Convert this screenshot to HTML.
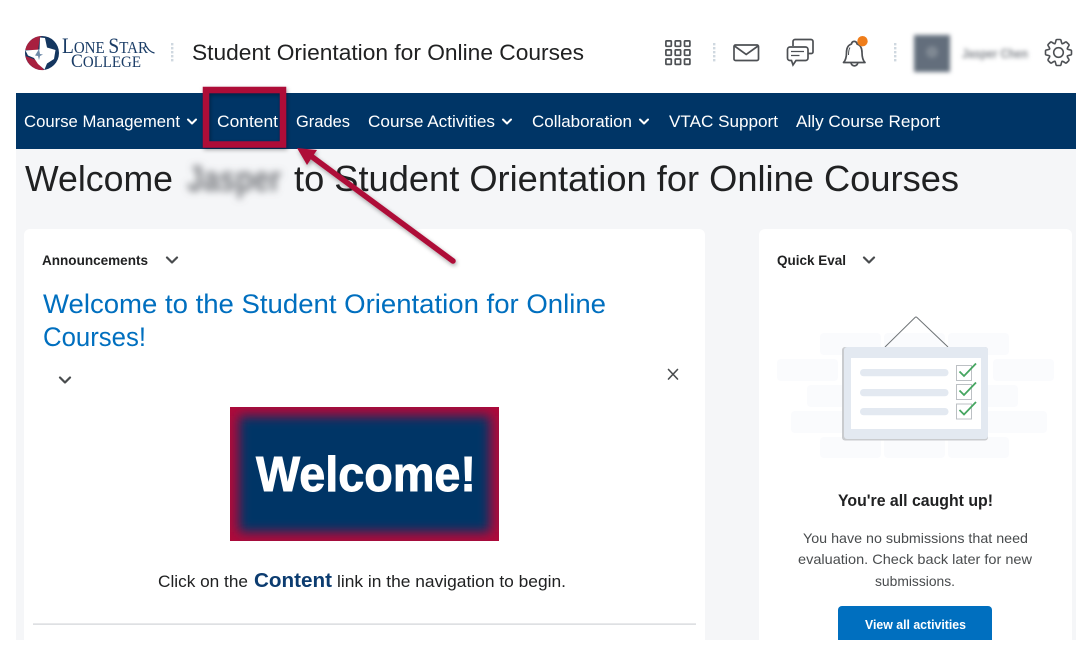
<!DOCTYPE html>
<html><head><meta charset="utf-8"><title>Student Orientation for Online Courses</title>
<style>html,body{margin:0;padding:0;background:#fff;width:1085px;height:653px;overflow:hidden}svg{display:block}text{font-family:"Liberation Sans",sans-serif;white-space:pre}</style></head>
<body>
<svg width="1085" height="653" viewBox="0 0 1085 653" xmlns="http://www.w3.org/2000/svg">
<defs>
<filter id="b2" x="-30%" y="-60%" width="160%" height="220%"><feGaussianBlur stdDeviation="3.600"/></filter>
<filter id="b1" x="-20%" y="-100%" width="140%" height="300%"><feGaussianBlur stdDeviation="2"/></filter>
<filter id="b5" x="-20%" y="-30%" width="140%" height="160%"><feGaussianBlur stdDeviation="5.500"/></filter>
<filter id="bl" x="-30%" y="-30%" width="160%" height="160%"><feGaussianBlur stdDeviation="2"/></filter>
<filter id="sh" x="-20%" y="-20%" width="140%" height="140%"><feDropShadow dx="1" dy="2" stdDeviation="2" flood-color="#000" flood-opacity=".35"/></filter>
<clipPath id="wc"><rect x="230" y="407" width="269" height="134"/></clipPath>
</defs>
<rect x="16" y="149" width="1060" height="491" fill="#f5f6f8"/>
<rect x="16" y="93" width="1060" height="56" fill="#003566"/>

<!-- logo -->
<circle cx="42" cy="53" r="17" fill="#14365f"/>
<path d="M42 36A17 17 0 0 0 25.300 50L38 50L40 37z" fill="#a8203f"/>
<path d="M25.500 56A17 17 0 0 0 44 70L36 60z" fill="#a8203f"/>
<path d="M40 37.500L39.500 49.500L25.500 50.500L28 55.500L34 58L38 64L44.500 69.500L47 63.500L54 59L55.500 50L47 47.500L45 38z" fill="#fff"/>
<path d="M36 54l3-5 1 5 3 .5-3 1.500-1 4-1-4-3-.5z" fill="#6f8aa8"/>
<text x="62" y="53" textLength="86" lengthAdjust="spacingAndGlyphs" font-size="17" fill="#1a3c66" style="font-family:'Liberation Serif',serif"><tspan font-size="22">L</tspan>ONE <tspan font-size="22">S</tspan>TAR</text>
<text x="71" y="67" textLength="70" lengthAdjust="spacingAndGlyphs" font-size="16" fill="#1a3c66" style="font-family:'Liberation Serif',serif"><tspan font-size="19">C</tspan>OLLEGE</text>
<path d="M146 46c2 3 4 6 8.500 7" fill="none" stroke="#1a3c66" stroke-width="1.200"/>

<!-- dividers -->
<g fill="#cfd8e0">
<rect x="171" y="43" width="2.400" height="2.400"/><rect x="171" y="47" width="2.400" height="2.400"/><rect x="171" y="51" width="2.400" height="2.400"/><rect x="171" y="55" width="2.400" height="2.400"/><rect x="171" y="59" width="2.400" height="2.400"/>
<rect x="713" y="43" width="2.400" height="2.400"/><rect x="713" y="47" width="2.400" height="2.400"/><rect x="713" y="51" width="2.400" height="2.400"/><rect x="713" y="55" width="2.400" height="2.400"/><rect x="713" y="59" width="2.400" height="2.400"/>
<rect x="894" y="43" width="2.400" height="2.400"/><rect x="894" y="47" width="2.400" height="2.400"/><rect x="894" y="51" width="2.400" height="2.400"/><rect x="894" y="55" width="2.400" height="2.400"/><rect x="894" y="59" width="2.400" height="2.400"/>
</g>

<text x="192" y="60" textLength="392" lengthAdjust="spacingAndGlyphs" font-size="22" fill="#202122">Student Orientation for Online Courses</text>

<!-- icons -->
<g fill="none" stroke="#4d5054" stroke-width="1.700">
<rect x="665.900" y="40.900" width="5.400" height="5.400" rx=".8"/><rect x="675.200" y="40.900" width="5.400" height="5.400" rx=".8"/><rect x="684.500" y="40.900" width="5.400" height="5.400" rx=".8"/>
<rect x="665.900" y="49.900" width="5.400" height="5.400" rx=".8"/><rect x="675.200" y="49.900" width="5.400" height="5.400" rx=".8"/><rect x="684.500" y="49.900" width="5.400" height="5.400" rx=".8"/>
<rect x="665.900" y="59" width="5.400" height="5.400" rx=".8"/><rect x="675.200" y="59" width="5.400" height="5.400" rx=".8"/><rect x="684.500" y="59" width="5.400" height="5.400" rx=".8"/>
<rect x="734" y="45" width="24.500" height="15.500" rx="1.500"/>
<path d="M734.500 46l11.700 8.500 11.800-8.500"/>
<path d="M793 46v-4.500a2 2 0 0 1 2-2h16a2 2 0 0 1 2 2v10.500a1.500 1.500 0 0 1-1.500 1.500h-3"/>
<path d="M790 47h15.500a2.500 2.500 0 0 1 2.500 2.500v8.500a2.500 2.500 0 0 1-2.500 2.500h-9.500l-3 4.500-1.500-4.500h-1.500a2.500 2.500 0 0 1-2.500-2.500v-8.500a2.500 2.500 0 0 1 2.500-2.500z"/>
<path d="M791 51.500h13M791 55.500h8.500" stroke-width="1.200"/>
<path d="M843.500 62.500c2.500-2.500 3-6 3-10 0-4.500 2-7.500 5-8.500.5-3.500 5-3.500 5.500 0 3 1 5 4 5 8.500 0 4 .5 7.500 3 10z" stroke-linejoin="round"/>
<path d="M851 62.500a3.400 3.400 0 0 0 6.800 0"/>
<path d="M850 47.500c-1.300 2-1.500 4.500-1.500 7.500" stroke-width="1"/>
</g>
<circle cx="862.500" cy="41.200" r="5.200" fill="#ef7d1a"/>
<!-- gear -->
<g transform="translate(1058.500 52.500)" fill="none" stroke="#4d5054" stroke-width="1.600" stroke-linejoin="round" stroke-linecap="round">
<circle r="4.800"/>
<path d="M-3.640-8.780C-2.800-9.500-2.800-11-2.500-12.200Q-2.300-13-1.500-13H1.500Q2.300-13 2.500-12.200C2.800-11 2.800-9.500 3.640-8.780"/>
<path transform="rotate(45)" d="M-3.640-8.780C-2.800-9.500-2.800-11-2.500-12.200Q-2.300-13-1.500-13H1.500Q2.300-13 2.500-12.200C2.800-11 2.800-9.500 3.640-8.780"/>
<path transform="rotate(90)" d="M-3.640-8.780C-2.800-9.500-2.800-11-2.500-12.200Q-2.300-13-1.500-13H1.500Q2.300-13 2.500-12.200C2.800-11 2.800-9.500 3.640-8.780"/>
<path transform="rotate(135)" d="M-3.640-8.780C-2.800-9.500-2.800-11-2.500-12.200Q-2.300-13-1.500-13H1.500Q2.300-13 2.500-12.200C2.800-11 2.800-9.500 3.640-8.780"/>
<path transform="rotate(180)" d="M-3.640-8.780C-2.800-9.500-2.800-11-2.500-12.200Q-2.300-13-1.500-13H1.500Q2.300-13 2.500-12.200C2.800-11 2.800-9.500 3.640-8.780"/>
<path transform="rotate(225)" d="M-3.640-8.780C-2.800-9.500-2.800-11-2.500-12.200Q-2.300-13-1.500-13H1.500Q2.300-13 2.500-12.200C2.800-11 2.800-9.500 3.640-8.780"/>
<path transform="rotate(270)" d="M-3.640-8.780C-2.800-9.500-2.800-11-2.500-12.200Q-2.300-13-1.500-13H1.500Q2.300-13 2.500-12.200C2.800-11 2.800-9.500 3.640-8.780"/>
<path transform="rotate(315)" d="M-3.640-8.780C-2.800-9.500-2.800-11-2.500-12.200Q-2.300-13-1.500-13H1.500Q2.300-13 2.500-12.200C2.800-11 2.800-9.500 3.640-8.780"/>
</g>
<!-- blurred user -->
<rect x="914" y="35" width="36" height="37" fill="#646e7b" filter="url(#bl)"/>
<circle cx="932" cy="52" r="6" fill="#7f8893" filter="url(#bl)"/>
<text x="962" y="58" textLength="66" lengthAdjust="spacingAndGlyphs" font-size="13" font-weight="bold" fill="#83878d" filter="url(#b1)">Jasper Chen</text>

<!-- nav -->
<g font-size="17" fill="#fff">
<text x="24" y="127" textLength="156" lengthAdjust="spacingAndGlyphs">Course Management</text>
<text x="217" y="127" textLength="61" lengthAdjust="spacingAndGlyphs">Content</text>
<text x="296" y="127" textLength="54" lengthAdjust="spacingAndGlyphs">Grades</text>
<text x="368" y="127" textLength="127" lengthAdjust="spacingAndGlyphs">Course Activities</text>
<text x="532" y="127" textLength="100" lengthAdjust="spacingAndGlyphs">Collaboration</text>
<text x="669" y="127" textLength="109" lengthAdjust="spacingAndGlyphs">VTAC Support</text>
<text x="796" y="127" textLength="144" lengthAdjust="spacingAndGlyphs">Ally Course Report</text>
</g>
<g fill="none" stroke="#fff" stroke-width="2" stroke-linecap="round" stroke-linejoin="round">
<path d="M188 119.500l4 4 4-4M503 119.500l4 4 4-4M640 119.500l4 4 4-4"/>
</g>

<!-- heading -->
<g font-size="36" fill="#202122">
<text x="25" y="191" textLength="148" lengthAdjust="spacingAndGlyphs">Welcome</text>
<text x="187" y="191" textLength="94" lengthAdjust="spacingAndGlyphs" font-weight="bold" fill="#74777b" filter="url(#b2)">Jasper</text>
<text x="294" y="191" textLength="665" lengthAdjust="spacingAndGlyphs">to Student Orientation for Online Courses</text>
</g>

<!-- cards -->
<path d="M24 640V235a6 6 0 0 1 6-6H699a6 6 0 0 1 6 6V640z" fill="#fff"/>
<path d="M759 640V235a6 6 0 0 1 6-6H1066a6 6 0 0 1 6 6V640z" fill="#fff"/>

<text x="42" y="265" textLength="106" lengthAdjust="spacingAndGlyphs" font-size="13.500" font-weight="bold" fill="#202122">Announcements</text>
<text x="777" y="265" textLength="69" lengthAdjust="spacingAndGlyphs" font-size="13.500" font-weight="bold" fill="#202122">Quick Eval</text>
<g fill="none" stroke="#494c4e" stroke-width="2.200" stroke-linecap="round" stroke-linejoin="round">
<path d="M167 257.500l5 5 5-5M864 257.500l5 5 5-5M60 377.500l5 5 5-5"/>
<path d="M668.500 369.500l9 9.500M677.500 369.500l-9 9.500" stroke-width="1.600"/>
</g>

<g font-size="27" fill="#006fbf">
<text x="43" y="313" textLength="563" lengthAdjust="spacingAndGlyphs">Welcome to the Student Orientation for Online</text>
<text x="43" y="346" textLength="103" lengthAdjust="spacingAndGlyphs">Courses!</text>
</g>

<!-- welcome image -->
<rect x="230" y="407" width="269" height="134" fill="#ad0a3a"/>
<g clip-path="url(#wc)"><rect x="239" y="416" width="251" height="116" fill="#003466" filter="url(#b5)"/></g>
<text x="256" y="491" textLength="220" lengthAdjust="spacingAndGlyphs" font-size="49" font-weight="bold" fill="#fff" stroke="#fff" stroke-width=".9">Welcome!</text>

<text x="158" y="587" textLength="90" lengthAdjust="spacingAndGlyphs" font-size="17" fill="#202122">Click on the</text>
<text x="254" y="587" textLength="78" lengthAdjust="spacingAndGlyphs" font-size="20" font-weight="bold" fill="#0c3c70">Content</text>
<text x="337" y="587" textLength="229" lengthAdjust="spacingAndGlyphs" font-size="17" fill="#202122">link in the navigation to begin.</text>
<rect x="33" y="623.500" width="663" height="1.200" fill="#d0d3d7"/>

<!-- illustration -->
<g fill="#fafbfd">
<rect x="820" y="333" width="61" height="22" rx="4"/><rect x="884" y="333" width="61" height="22" rx="4"/><rect x="948" y="333" width="61" height="22" rx="4"/>
<rect x="777" y="359" width="61" height="22" rx="4"/><rect x="993" y="359" width="61" height="22" rx="4"/>
<rect x="807" y="385" width="61" height="22" rx="4"/><rect x="957" y="385" width="61" height="22" rx="4"/>
<rect x="791" y="411" width="61" height="22" rx="4"/><rect x="986" y="411" width="61" height="22" rx="4"/>
<rect x="820" y="437" width="61" height="21" rx="4"/><rect x="884" y="437" width="61" height="21" rx="4"/><rect x="948" y="437" width="61" height="21" rx="4"/>
</g>
<path d="M885 347l30-29.500q1-1 2 0l31 29.500" fill="none" stroke="#6e7376" stroke-width="1"/>
<rect x="842" y="347" width="146" height="93.500" rx="3" fill="#c9cbce"/>
<rect x="844" y="347" width="144" height="92" rx="3" fill="#e3e9f1"/>
<rect x="851" y="358" width="130" height="71" fill="#fff"/>
<g fill="#e3e9f1">
<rect x="860" y="369" width="88.500" height="7.300" rx="3.600"/><rect x="860" y="389" width="88.500" height="7.300" rx="3.600"/><rect x="860" y="408" width="88.500" height="7.300" rx="3.600"/>
</g>
<g fill="#fff" stroke="#bcc0c4" stroke-width="1">
<rect x="956.500" y="365.500" width="15" height="15"/><rect x="956.500" y="384.500" width="15" height="15"/><rect x="956.500" y="404" width="15" height="15"/>
</g>
<g fill="none" stroke="#46a661" stroke-width="1.800">
<path d="M959.500 371.500l4.500 4.500 12-12.500M959.500 390.500l4.500 4.500 12-12.500M959.500 410l4.500 4.500 12-12.500"/>
</g>

<text x="838" y="506" textLength="155" lengthAdjust="spacingAndGlyphs" font-size="16.500" font-weight="bold" fill="#202122">You're all caught up!</text>
<g font-size="14" fill="#494c4e">
<text x="803" y="543" textLength="225" lengthAdjust="spacingAndGlyphs">You have no submissions that need</text>
<text x="798" y="564" textLength="234" lengthAdjust="spacingAndGlyphs">evaluation. Check back later for new</text>
<text x="875" y="586" textLength="80" lengthAdjust="spacingAndGlyphs">submissions.</text>
</g>
<path d="M838 640V610a4 4 0 0 1 4-4H988a4 4 0 0 1 4 4V640z" fill="#006fbf"/>
<text x="865" y="629" textLength="101" lengthAdjust="spacingAndGlyphs" font-size="13" font-weight="bold" fill="#fff">View all activities</text>

<!-- annotations -->
<rect x="206" y="90" width="77" height="54.500" fill="none" stroke="#ae0a38" stroke-width="6.500" filter="url(#sh)"/>
<g filter="url(#sh)">
<path d="M311 156L453 261" stroke="#ae0a38" stroke-width="5.500" stroke-linecap="round" fill="none"/>
<path d="M297 148L317 150L307 165z" fill="#ae0a38"/>
</g>
</svg>
</body></html>
